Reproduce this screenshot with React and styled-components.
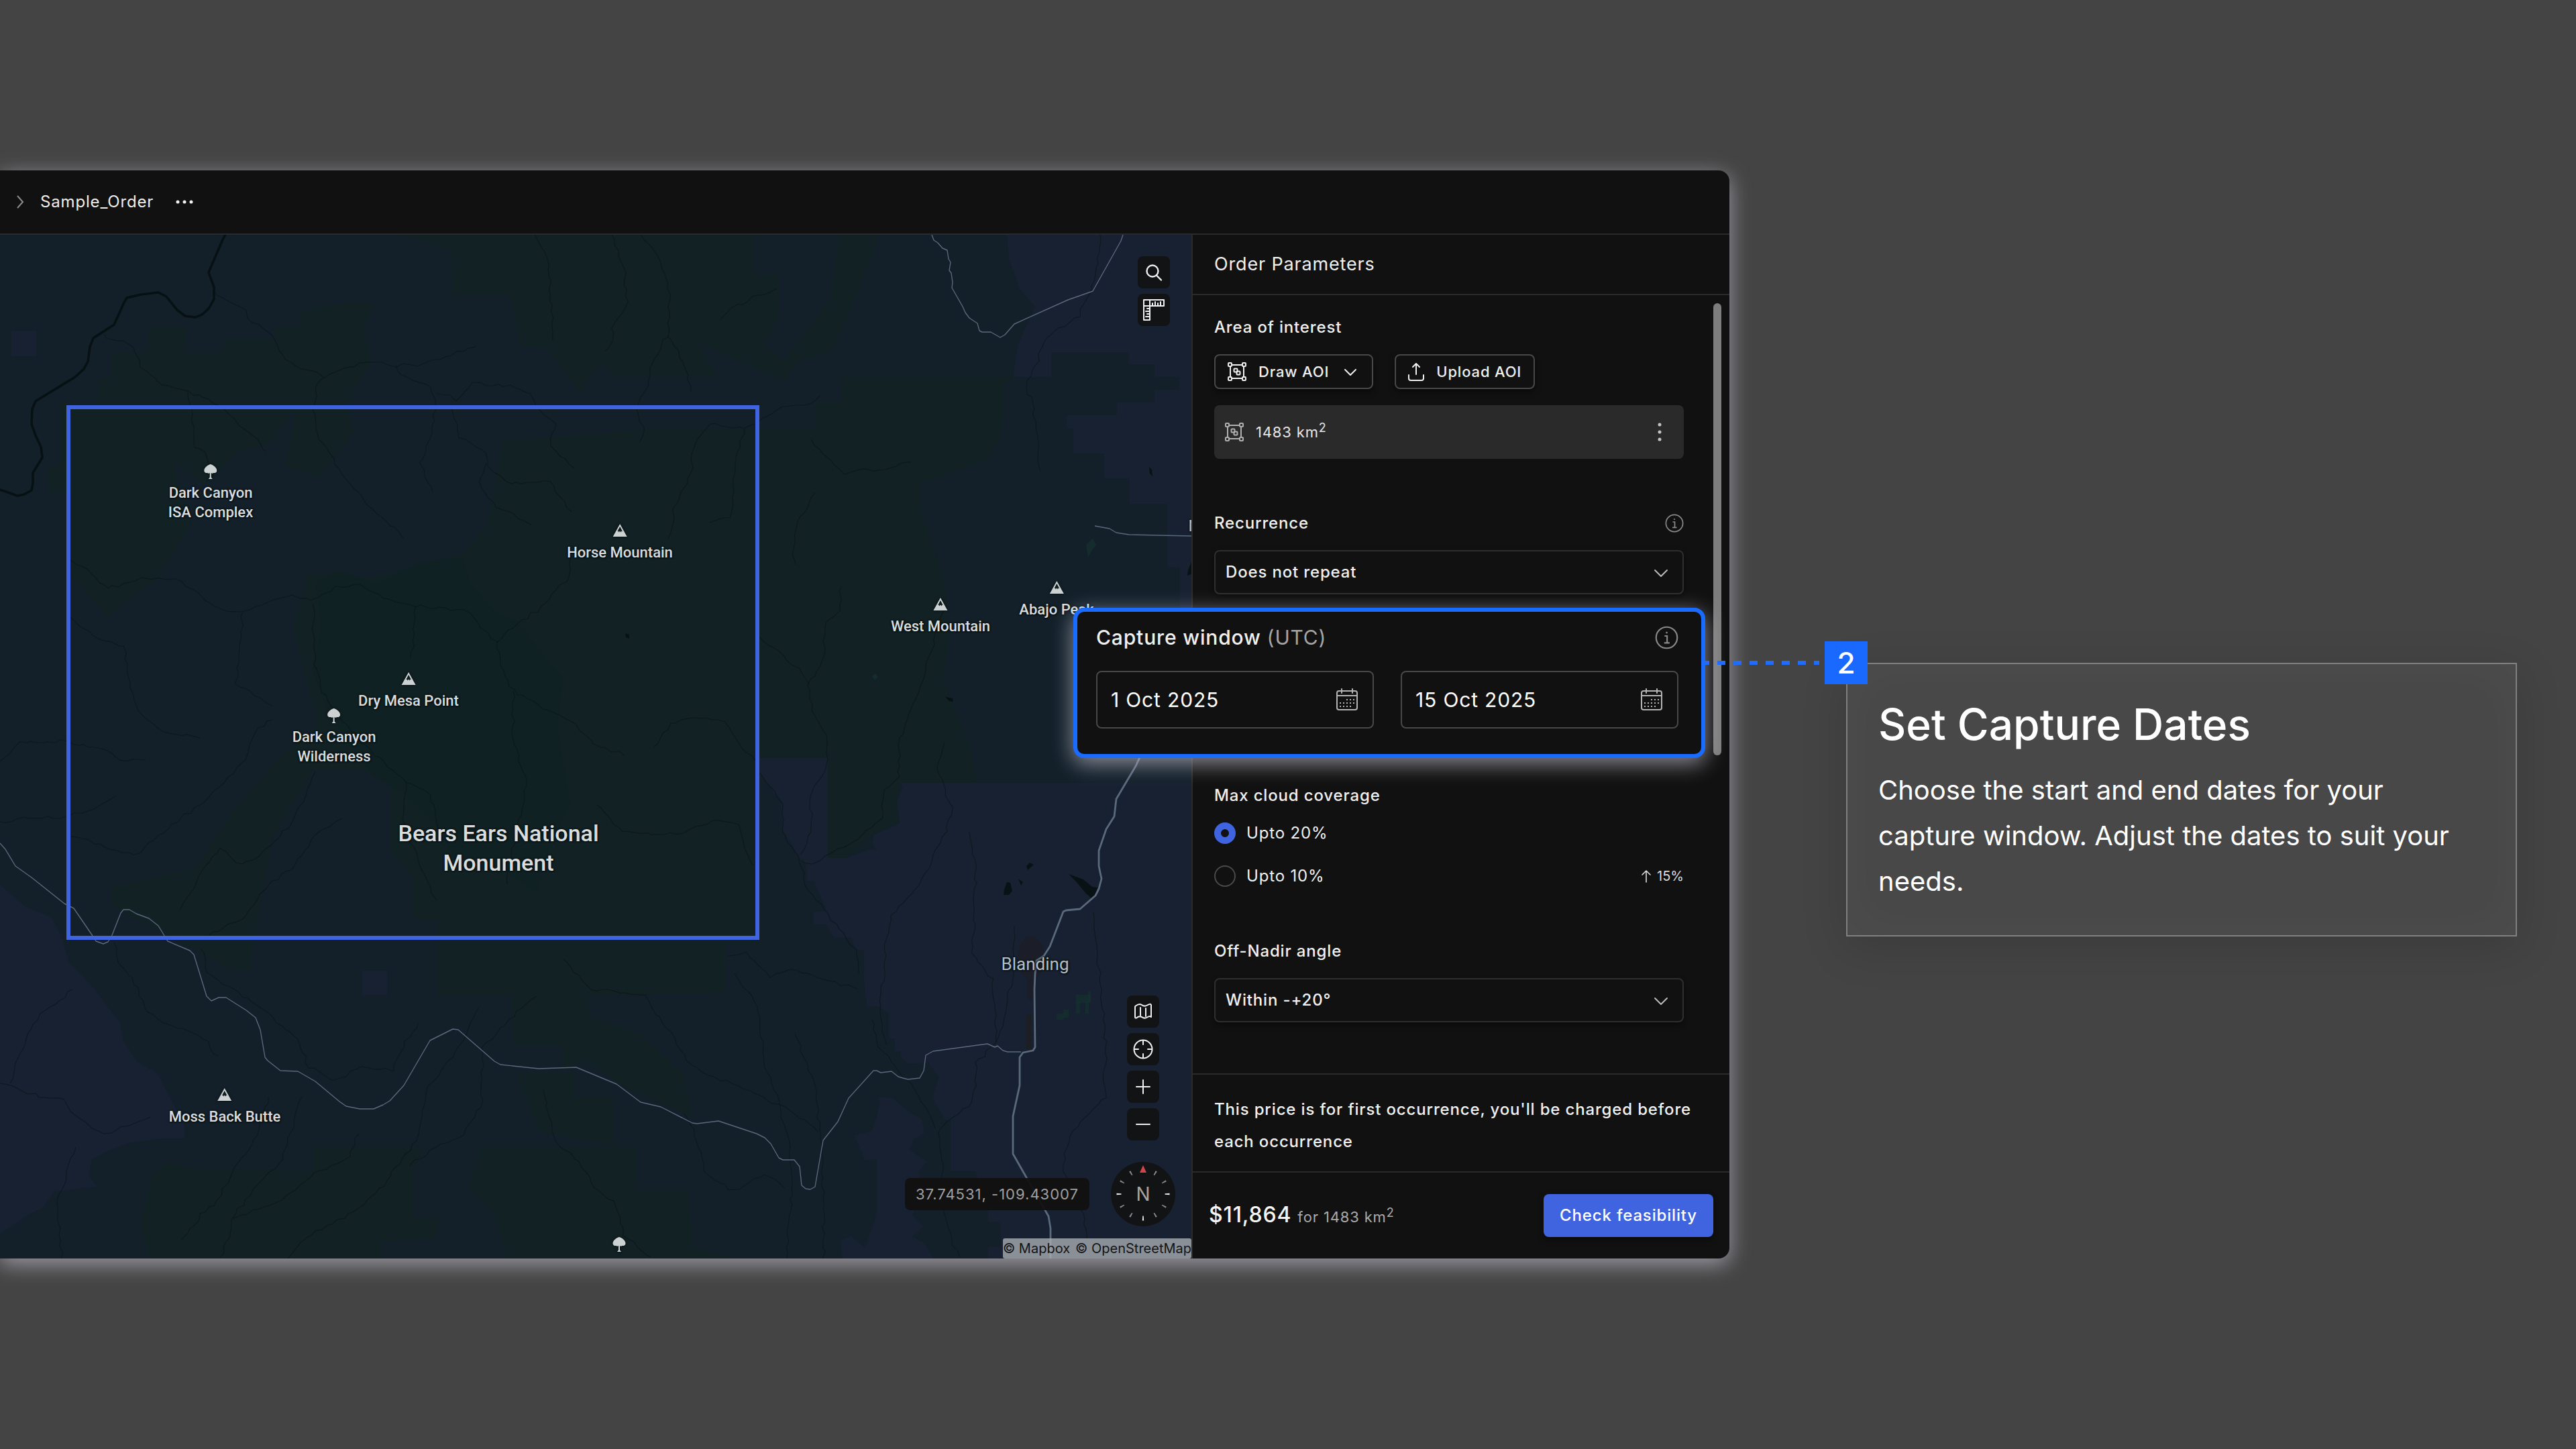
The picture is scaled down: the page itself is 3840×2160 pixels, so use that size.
import React from "react";
import styled, { createGlobalStyle, css } from "styled-components";

const GlobalStyle = createGlobalStyle`
  *, *::before, *::after { box-sizing: border-box; }
  body {
    margin: 0;
    background: #444444;
    color: #f0f0f0;
    font-family: Inter, "Liberation Sans", sans-serif;
    font-size: 24px;
    line-height: 32px;
  }
  button, input, select { font: inherit; color: inherit; letter-spacing: inherit; margin: 0; }
  h1, h2, p, fieldset { margin: 0; }
`;

/* ---------- page ---------- */

const Page = styled.div`
  display: grid;
  grid-template-columns: minmax(0, 1fr) 1000px;
  column-gap: 174px;
  align-items: start;
  min-height: 100vh;
  padding: 254px 88px 284px 0;
`;

const glow = css`
  box-shadow: 0 8px 32px rgba(200, 198, 212, 0.68);
`;

const AppWindow = styled.main`
  background: #111111;
  border-radius: 0 16px 16px 0;
  letter-spacing: 0.035em;
  ${glow}
`;

const TopBar = styled.header`
  display: flex;
  align-items: center;
  gap: 32px;
  height: 96px;
  padding: 0 24px;
  border-bottom: 2px solid #2a2a2a;
`;

const Crumb = styled.nav`
  display: flex;
  align-items: center;
  gap: 24px;
`;

const CrumbLink = styled.a`
  color: #eeeeee;
  text-decoration: none;
`;

const Workspace = styled.div`
  display: grid;
  grid-template-columns: minmax(0, 1fr) 802px;
`;

const PlainButton = styled.button`
  display: flex;
  align-items: center;
  justify-content: center;
  padding: 0;
  border: 0;
  background: none;
  cursor: pointer;
  svg { display: block; }
`;

/* ---------- map ---------- */

const MapArea = styled.section`
  position: relative;
  overflow: hidden;
  background: #13202a;
`;

const MapDrawing = styled.svg`
  position: absolute;
  inset: 0;
  width: 100%;
  height: 100%;
`;

const Place = styled.div`
  position: absolute;
  left: ${(p) => p.$x}px;
  top: ${(p) => p.$y}px;
  transform: translateX(-50%);
  display: flex;
  flex-direction: column;
  align-items: center;
  gap: 6px;
  color: ${(p) => (p.$dim ? "#b9bec4" : "#d9dddd")};
  font-family: Roboto, "Liberation Sans", sans-serif;
  font-size: ${(p) => p.$size || 22}px;
  font-weight: ${(p) => (p.$dim ? 400 : 500)};
  line-height: ${(p) => p.$line || 29}px;
  letter-spacing: 0;
  text-align: center;
  white-space: nowrap;
  text-shadow: 0 0 3px #0a1214, 0 0 3px #0a1214, 1px 1px 2px #0a1214;
  svg { display: block; filter: drop-shadow(0 0 2px #060c0e); }
`;

const ToolStack = styled.div`
  position: absolute;
  display: flex;
  flex-direction: column;
  gap: 8px;
  ${(p) => (p.$top ? "top: 32px; right: 32px;" : "bottom: 176px; right: 48px;")}
`;

const ToolButton = styled(PlainButton)`
  width: 48px;
  height: 48px;
  border-radius: 8px;
  background: #111315;
  color: #f0f0f0;
`;

const Compass = styled(PlainButton)`
  position: absolute;
  right: 24px;
  bottom: 48px;
  width: 96px;
  height: 96px;
  border-radius: 50%;
  background: #111315;
`;

const CompassLetter = styled.span`
  position: absolute;
  color: #a3a5a7;
  font-size: 28px;
  letter-spacing: 0;
`;

const Coordinates = styled.output`
  position: absolute;
  right: 152px;
  bottom: 72px;
  display: flex;
  align-items: center;
  height: 48px;
  padding: 0 16px;
  border-radius: 8px;
  background: rgba(17, 17, 17, 0.95);
  color: #a0a0a0;
  font-size: 22px;
  letter-spacing: 1px;
`;

const Attribution = styled.div`
  position: absolute;
  right: 0;
  bottom: 0;
  display: flex;
  gap: 8px;
  height: 30px;
  border-radius: 3px;
  background: rgba(168, 172, 178, 0.8);
  font-size: 20px;
  line-height: 30px;
  letter-spacing: 0;
  a { color: #141414; text-decoration: none; }
`;

/* ---------- side panel ---------- */

const Panel = styled.aside`
  border-left: 2px solid #2a2a2a;
`;

const PanelHeader = styled.div`
  display: flex;
  align-items: center;
  height: 90px;
  padding: 0 32px;
  border-bottom: 2px solid #2a2a2a;
  h1 { font-size: 27px; font-weight: 400; }
`;

const PanelBody = styled.form`
  position: relative;
  padding: 32px 68px 76px 32px;
`;

const ScrollThumb = styled.div`
  position: absolute;
  top: 12px;
  right: 12px;
  width: 12px;
  height: 674px;
  border-radius: 6px;
  background: #7d7d7d;
`;

const Section = styled.fieldset`
  display: flex;
  flex-direction: column;
  gap: 24px;
  min-width: 0;
  padding: 0;
  border: 0;
  margin-bottom: ${(p) => (p.$gap ?? 80)}px;
`;

const SectionHead = styled.div`
  display: flex;
  align-items: center;
  justify-content: space-between;
  height: 32px;
  font-weight: 500;
`;

const ButtonRow = styled.div`
  display: flex;
  gap: 32px;
`;

const OutlineButton = styled(PlainButton)`
  gap: 18px;
  height: 52px;
  padding: 0 18px;
  border: 2px solid #484848;
  border-radius: 8px;
  font-size: 22px;
  font-weight: 500;
  box-shadow: 0 4px 8px rgba(0, 0, 0, 0.5);
`;

const AreaItem = styled.div`
  display: flex;
  align-items: center;
  gap: 18px;
  height: 80px;
  padding: 0 16px;
  border-radius: 8px;
  background: #2a2a2a;
  color: #e6e6e6;
  font-size: 22px;
  > svg { color: #b0b0b0; }
  > button { margin-left: auto; width: 40px; height: 40px; color: #c4c4c4; }
`;

const Squared = styled.sup`
  font-size: 18px;
  line-height: 0;
`;

const SelectBox = styled.div`
  position: relative;
  height: 66px;
  border: 2px solid #2e2e2e;
  border-radius: 8px;
  box-shadow: 0 4px 8px rgba(0, 0, 0, 0.4);
  select {
    width: 100%;
    height: 100%;
    padding: 0 64px 0 15px;
    border: 0;
    background: transparent;
    appearance: none;
    font-weight: 500;
    outline: none;
  }
  svg {
    position: absolute;
    right: 20px;
    top: 20px;
    color: #bbbbbb;
    pointer-events: none;
  }
`;

const RadioRow = styled.div`
  display: flex;
  align-items: center;
  justify-content: space-between;
  height: 32px;
  & + & { margin-top: 8px; }
  label { display: flex; align-items: center; gap: 16px; }
`;

const Radio = styled.input`
  appearance: none;
  width: 32px;
  height: 32px;
  border: 2px solid #4a4a4a;
  border-radius: 50%;
  background: #111111;
  &:checked { border: 10px solid #4064e0; }
`;

const Surcharge = styled.span`
  display: flex;
  align-items: center;
  gap: 8px;
  color: #dddddd;
  font-size: 20px;
  letter-spacing: 0;
`;

/* the capture window section keeps its place in the form; its card is lifted above the page */
const CaptureSlot = styled.div`
  position: relative;
  height: 224px;
  margin: -60px 0 40px;
`;

const CaptureCard = styled.div`
  position: absolute;
  inset: 0 -32px 0 -210px;
  z-index: 2;
  padding: 18px 34px 38px 28px;
  border: 6px solid #1a6bff;
  border-radius: 16px;
  background: #111111;
  ${glow}
`;

const CaptureHead = styled.div`
  display: flex;
  align-items: center;
  justify-content: space-between;
  height: 40px;
  font-size: 30px;
  font-weight: 500;
  span { color: #a5a5a5; font-weight: 400; }
`;

const DateRow = styled.div`
  display: grid;
  grid-template-columns: repeat(2, minmax(0, 1fr));
  gap: 40px;
  margin-top: 30px;
`;

const DateField = styled.label`
  display: flex;
  align-items: center;
  height: 86px;
  padding: 0 22px 0 20px;
  border: 2px solid #484848;
  border-radius: 8px;
  font-size: 30px;
  input {
    flex: 1;
    min-width: 0;
    height: 100%;
    padding: 0;
    border: 0;
    background: transparent;
    outline: none;
    color: #ffffff;
  }
  svg { flex: none; color: #b4b4b4; }
`;

const Note = styled.p`
  padding: 28px 32px 20px;
  border-top: 2px solid #2a2a2a;
  border-bottom: 2px solid #2a2a2a;
  font-weight: 500;
  line-height: 48px;
`;

const PanelFooter = styled.div`
  display: flex;
  align-items: center;
  justify-content: space-between;
  padding: 32px 24px;
`;

const Price = styled.div`
  color: #aaaaaa;
  font-size: 22px;
  strong { color: #f4f4f4; font-size: 32px; font-weight: 500; margin-right: 2px; }
`;

const PrimaryButton = styled(PlainButton)`
  height: 64px;
  padding: 0 24px;
  border-radius: 8px;
  background: #4064e0;
  color: #ffffff;
  font-weight: 500;
  box-shadow: 0 4px 8px rgba(0, 0, 0, 0.5);
`;

/* ---------- callout ---------- */

const Callout = styled.aside`
  position: relative;
  margin-top: 734px;
  padding: 50px 46px 46px;
  border: 2px solid #808080;
  background: #484848;
  box-shadow: 0 16px 64px rgba(0, 0, 0, 0.14), inset 0 0 80px rgba(255, 255, 255, 0.03);
  color: #ffffff;
  h2 { margin-bottom: 24px; font-size: 64px; font-weight: 500; line-height: 80px; }
  p { font-size: 40px; line-height: 68px; }
`;

const StepBadge = styled.span`
  position: absolute;
  top: -34px;
  left: -34px;
  display: flex;
  align-items: center;
  justify-content: center;
  width: 64px;
  height: 64px;
  background: #1a69ff;
  font-size: 44px;
  font-weight: 500;
`;

const Connector = styled.span`
  position: absolute;
  top: -5px;
  left: -218px;
  z-index: 3;
  width: 176px;
  height: 6px;
  background: repeating-linear-gradient(90deg, #1f6dff 0 12px, transparent 12px 24px);
`;

/* ---------- icons ---------- */

const Svg = ({ w, h = w, vb, sw = 2, children }) => (
  <svg width={w} height={h} viewBox={vb || `0 0 ${w} ${h}`} fill="none" stroke="currentColor"
    strokeWidth={sw} strokeLinecap="round" strokeLinejoin="round" aria-hidden="true">
    {children}
  </svg>
);

const ChevronDown = () => <Svg w={24} h={24}><path d="M3 8l9 9 9-9" /></Svg>;
const SmallChevron = () => <Svg w={28}><path d="M6 11l8 8 8-8" /></Svg>;
const ShapeIcon = () => (
  <Svg w={28}>
    <path d="M7 4h14M7 24h14M4 7v14M24 7v14" />
    <rect x="1" y="1" width="5" height="5" rx="1" />
    <rect x="22" y="1" width="5" height="5" rx="1" />
    <rect x="1" y="22" width="5" height="5" rx="1" />
    <rect x="22" y="22" width="5" height="5" rx="1" />
    <rect x="9.5" y="9.5" width="5" height="5" rx="1" />
    <rect x="13.5" y="13.5" width="5" height="5" rx="1" />
  </Svg>
);
const UploadIcon = () => (
  <Svg w={24} h={28}><path d="M12 18V2M7 7l5-5 5 5M1 19v5q0 3 3 3h16q3 0 3-3v-5" /></Svg>
);
const InfoIcon = ({ size }) => (
  <svg width={size} height={size} viewBox="0 0 28 28" fill="none" stroke="#8a8a8a" strokeWidth="1.7" aria-hidden="true">
    <circle cx="14" cy="14" r="12.6" />
    <path d="M11.5 12h3v8M11 20.3h6.5" />
    <circle cx="14" cy="8" r="1.1" fill="#8a8a8a" stroke="none" />
  </svg>
);
const CalendarIcon = () => (
  <Svg w={32} h={34}>
    <rect x="1" y="4" width="30" height="28" rx="3" />
    <path d="M1 11h30M8 1v6M24 1v6" />
    {[[16, 17], [21, 17], [26, 17], [6, 22], [11, 22], [16, 22], [21, 22], [26, 22], [6, 27], [11, 27], [16, 27], [21, 27]].map(
      ([x, y]) => <path key={`${x}-${y}`} strokeLinecap="butt" d={`M${x} ${y - 1}v2`} />
    )}
  </Svg>
);
const ArrowUp = () => <Svg w={16} h={20} sw={1.6}><path d="M8 19V2M2 8l6-6 6 6" /></Svg>;
const SearchIcon = () => <Svg w={28} sw={2.4}><circle cx="12" cy="12" r="8.5" /><path d="M18 18.5l7 7" /></Svg>;
const RulerIcon = () => (
  <Svg w={34} sw={2}>
    <path d="M2 2h30v9H11v21H2zM2 11h9V2" />
    <path d="M15 11V7M19 11V5M23 11V7M27 11V5M11 15H7M11 19H5M11 23H7M11 27H5" />
  </Svg>
);
const MapIcon = () => (
  <Svg w={28}>
    <path d="M3 5.500q5-4 9-1.500 4 3 8 .5 5-3 6-.5v18q-2-2-6 .5-4 2.500-8-.5-4-2-8 1.500-2 .5-2-1.500V7q0-1 1-1.500z" />
    <path d="M10 8v12M18 9v12" />
  </Svg>
);
const TargetIcon = () => (
  <Svg w={30}><circle cx="15" cy="15" r="13.500" /><path d="M15 2v6M15 22v6M2 15h6M22 15h6" /></Svg>
);
const PlusIcon = () => <Svg w={24}><path d="M2 12h20M12 2v20" /></Svg>;
const MinusIcon = () => <Svg w={24}><path d="M2 12h20" /></Svg>;

const TreeIcon = () => (
  <svg width="20" height="22" viewBox="0 0 20 22" fill="#ccd2d2" aria-hidden="true">
    <path d="M10 0c-4 1-9.500 5-9.500 9.500 0 3 3 4 5 3.500 1 1 2.500 1 3.500 0v6.500L7 22h6l-2-2.500V13c1 1 2.500 1 3.500 0 2 .5 5-.5 5-3.500C19.500 5 14 1 10 0z" />
  </svg>
);
const PeakIcon = () => (
  <svg width="22" height="22" viewBox="0 0 22 22" aria-hidden="true">
    <path d="M11 0l10.500 19H.5z" fill="#ccd2d2" />
    <path d="M11 4l4 7.500-1.500-1-1 2-1.500-2-1.500 2-1-2-1.500 1z" fill="#0f1c1f" />
  </svg>
);

const CompassTicks = () => (
  <svg width="96" height="96" viewBox="0 0 96 96" aria-hidden="true">
    {Array.from({ length: 11 }, (_, i) => (i + 1) * 30).map((a) => (
      <path key={a} d="M46.800 8.500h2.400l-.5 7h-1.400z" fill={a % 90 ? "#8a8c8e" : "#e8e8e8"} transform={`rotate(${a} 48 48)`} />
    ))}
    <path d="M48 5l5 11H43z" fill="#d0454c" />
  </svg>
);

/* ---------- map drawing ---------- */

/* breaks a stream's segments into small irregular steps */
const meander = (points, seed) => {
  let s = seed * 7919 + 13;
  const rnd = () => {
    s = (s * 16807) % 2147483647;
    return s / 2147483647 - 0.5;
  };
  const out = [points[0]];
  for (let i = 1; i < points.length; i++) {
    const [x0, y0] = points[i - 1];
    const [x1, y1] = points[i];
    const n = Math.max(1, Math.round(Math.hypot(x1 - x0, y1 - y0) / 9));
    for (let k = 1; k <= n; k++) {
      const t = k / n;
      out.push([x0 + (x1 - x0) * t + rnd() * 5, y0 + (y1 - y0) * t + rnd() * 5]);
    }
  }
  return out.map(([x, y]) => `${x.toFixed(1)},${y.toFixed(1)}`).join(" ");
};

const navy = [
  "1501,350 1504,386 1520,431 1543,457 1517,515 1510,562 1567,562 1567,525 1683,525 1683,543 1721,543 1721,562 1758,562 1758,581 1721,581 1721,600 1665,600 1665,619 1590,619 1590,638 1600,638 1600,676 1646,676 1646,713 1684,713 1684,751 1740,751 1740,845 1759,845 1759,930 1776,930 1776,350",
  "1342,1167 1346,1173 1337,1193 1341,1227 1322,1236 1303,1244 1301,1257 1307,1267 1295,1267 1261,1279 1234,1279 1234,1130 1132,1130 1133,1153 1164,1196 1166,1236 1194,1282 1203,1289 1203,1313 1213,1313 1232,1357 1213,1360 1213,1378 1232,1378 1242,1397 1269,1397 1276,1416 1288,1416 1288,1460 1292,1500 1308,1500 1325,1510 1325,1548 1334,1548 1334,1567 1343,1567 1343,1576 1353,1585 1371,1585 1383,1583 1400,1606 1390,1635 1408,1669 1417,1670 1417,1745 1454,1746 1473,1804 1473,1821 1492,1821 1492,1859 1473,1859 1473,1876 1776,1876 1776,1167",
  "1300,1686 1312,1645 1308,1635 1330,1637 1360,1661 1374,1668 1378,1690 1363,1697 1355,1714 1382,1731 1370,1745 1375,1776 1360,1812 1377,1828 1360,1843 1380,1855 1391,1876 1256,1876 1252,1850 1268,1842 1290,1860 1300,1830 1307,1810 1307,1728 1290,1730 1273,1693",
  "0,1319 38,1351 77,1368 90,1392 103,1435 137,1470 179,1525 184,1552 205,1583 235,1600 256,1642 275,1676 275,1697 239,1697 192,1704 171,1711 137,1728 132,1752 145,1769 81,1776 64,1800 43,1810 17,1828 0,1838",
  "17,493 54,493 54,531 17,531",
  "540,1447 577,1447 577,1483 540,1483",
];

const green = [
  "166,525 221,525 221,487 278,487 278,525 333,525 333,505 409,505 409,487 447,487 447,466 488,453 560,451 542,487 554,537 534,573 517,604 528,644 476,712 425,694 442,605 408,658 356,673 304,723 258,687 285,780 240,858 160,920 105,858 105,733 72,733 72,694 89,694 89,601 145,601 145,563 166,563",
  "597,350 672,374 674,441 760,441 775,516 815,519 844,558 867,589 878,562 900,544 914,562 1069,562 1041,511 1107,542 1170,569 1187,542 1244,520 1290,408 1310,350 1250,350 1239,444 1167,538 1141,515 1161,471 1161,410 1124,410 1124,350",
  "748,657 960,640 1216,640 1216,600 1254,600 1254,562 1510,562 1497,573 1494,645 1474,685 1371,721 1374,765 1408,863 1415,954 1406,1014 1431,1075 1448,1114 1457,1167 1342,1167 1337,1193 1341,1227 1303,1244 1261,1279 1234,1279 1234,1130 1132,1130 1132,1408 1081,1408 1081,1482 876,1483 880,1514 957,1542 1017,1600 1034,1666 985,1645 932,1621 872,1580 842,1594 838,1557 765,1557 761,1483 651,1483 651,1372 616,1372 616,1310 582,1270 582,1168 536,1147 467,1147 406,1249 372,1445 345,1445 245,1392 165,1351 165,1323 291,1294 344,1212 413,1131 474,1082 459,1025 436,935 459,853 551,862 689,825 727,780",
  "209,1828 226,1748 256,1731 291,1742 466,1745 466,1709 632,1709 615,1745 615,1814 654,1814 650,1845 568,1852 568,1876 222,1876",
  "718,1709 949,1709 949,1774 1025,1774 1034,1859 1094,1876 756,1876 735,1807 697,1769",
  "769,1600 855,1600 855,1635 914,1635 914,1709 803,1686",
];

const deepGreen = "470,870 505,850 560,870 620,840 690,830 700,870 740,915 770,925 820,990 840,1010 830,1080 850,1200 820,1260 800,1330 740,1290 690,1300 650,1230 600,1180 560,1160 520,1110 490,1060 465,1000 480,930";

const water = [
  "1593,1303 1615,1311 1628,1322 1636,1323 1633,1334 1627,1339 1619,1332 1604,1314",
  "1501,1315 1506,1316 1509,1328 1504,1334 1496,1334 1497,1326",
  "1535,1286 1541,1289 1532,1297 1530,1291",
  "1518,1310 1525,1315 1522,1320",
  "1409,1039 1420,1041 1421,1046 1415,1045",
  "932,944 938,946 938,952 933,950",
  "1713,696 1717,700 1718,710 1714,706",
  "1776,838 1771,850 1770,858 1776,856",
];

const roads = [
  "1389,350 1392,358 1398,362 1405,370 1412,373 1414,386 1417,391 1415,403 1418,407 1420,421 1419,429 1435,457 1439,466 1445,474 1457,482 1460,493 1464,495 1477,495 1491,503 1498,499 1512,483 1592,447 1629,434 1671,359 1674,350",
  "1632,784 1654,788 1664,794 1683,797 1776,799",
  "0,1257 8,1266 23,1291 47,1308 96,1347 110,1354 138,1395 143,1403 154,1407 161,1404 167,1394 180,1361 184,1356 193,1356 203,1362 222,1369 236,1380 250,1403 283,1417 289,1423 308,1485 315,1492 326,1487 337,1487 367,1506 381,1517 388,1535 395,1576 399,1581 418,1596 444,1597 470,1612 506,1642 516,1649 536,1653 557,1653 571,1647 581,1641 602,1618 641,1551 675,1534 683,1535 737,1582 746,1587 803,1593 859,1591 919,1616 955,1643 985,1650 1032,1674 1039,1675 1071,1671 1128,1690 1140,1696 1149,1705 1161,1726 1167,1729 1184,1729 1192,1739 1195,1767 1201,1772 1208,1773 1215,1769 1227,1700 1249,1672 1265,1637 1302,1596 1307,1596 1313,1599 1329,1597 1339,1605 1353,1609 1371,1607 1377,1596 1380,1573 1391,1567 1472,1556 1483,1561 1487,1559 1495,1566 1502,1568 1522,1568",
];

const highway = "1699,1129 1693,1142 1664,1191 1661,1217 1649,1236 1638,1268 1638,1291 1642,1310 1638,1325 1633,1335 1610,1355 1589,1357 1585,1359 1565,1411 1556,1425 1545,1432 1543,1452 1542,1475 1543,1561 1540,1566 1525,1569 1520,1576 1520,1618 1510,1664 1510,1720 1563,1813 1566,1831 1566,1876";

const river = "336,350 332,357 311,406 319,428 319,446 311,460 301,469 291,473 276,471 264,462 248,442 236,436 210,439 189,444 185,451 170,484 139,504 134,517 131,539 125,550 112,562 53,598 48,610 47,632 53,649 61,666 63,682 49,705 49,721 47,731 36,737 26,739 0,730";

const streams = [
  [[319, 435], [333, 447], [360, 455], [370, 475], [402, 497], [425, 535], [440, 545], [475, 555], [482, 563], [510, 550], [555, 538], [590, 545], [630, 543], [680, 525], [708, 518]],
  [[482, 563], [472, 580], [466, 610], [475, 655], [497, 685], [520, 720], [560, 765], [600, 800]],
  [[155, 498], [165, 508], [185, 507], [204, 525], [210, 545], [235, 570], [280, 585], [310, 596], [335, 610], [360, 638], [385, 655], [397, 675]],
  [[280, 585], [288, 635], [292, 665], [310, 680], [318, 715]],
  [[590, 545], [600, 560], [640, 578], [650, 600], [642, 645], [628, 690], [645, 735]],
  [[650, 586], [670, 590], [678, 598], [705, 572], [760, 575], [790, 585], [800, 605], [828, 632], [820, 665], [855, 698]],
  [[672, 605], [685, 650], [720, 670], [730, 700], [760, 720], [820, 718], [850, 765]],
  [[725, 690], [712, 720], [740, 755], [790, 780]],
  [[797, 350], [815, 385], [820, 430], [825, 480], [822, 505]],
  [[912, 350], [930, 400], [935, 450], [914, 490], [910, 515], [900, 525]],
  [[955, 350], [985, 390], [998, 440], [995, 500], [975, 535], [965, 575], [950, 610], [960, 640], [952, 660]],
  [[995, 500], [1020, 540], [1031, 583]],
  [[1075, 475], [1090, 460], [1130, 440], [1158, 432]],
  [[1640, 350], [1635, 400], [1625, 435], [1608, 470], [1580, 490], [1555, 510], [1545, 545], [1530, 570], [1540, 610], [1545, 650], [1549, 700]],
  [[1222, 590], [1210, 600], [1175, 605], [1145, 620], [1110, 640], [1060, 632], [1035, 660], [1030, 705], [1005, 760], [998, 805]],
  [[1110, 640], [1098, 680], [1090, 770], [1060, 777]],
  [[1210, 655], [1230, 680], [1257, 706], [1285, 700], [1310, 703], [1360, 688]],
  [[1215, 735], [1190, 780], [1180, 825], [1187, 842]],
  [[1254, 875], [1250, 910], [1230, 930], [1228, 985], [1205, 1020], [1210, 1060], [1235, 1105], [1232, 1140], [1210, 1180], [1208, 1240], [1195, 1275]],
  [[1132, 950], [1160, 970], [1190, 995], [1205, 1018]],
  [[1407, 910], [1385, 980], [1365, 1040], [1340, 1110], [1340, 1160], [1318, 1180], [1315, 1220], [1270, 1255], [1240, 1270], [1210, 1290], [1193, 1285]],
  [[1408, 1107], [1396, 1145], [1418, 1205], [1410, 1240], [1387, 1285], [1370, 1320], [1330, 1365], [1320, 1400], [1318, 1460], [1310, 1490], [1320, 1555]],
  [[1445, 1240], [1455, 1300], [1452, 1370], [1450, 1420], [1480, 1460], [1484, 1520], [1485, 1553]],
  [[1132, 1152], [1165, 1196], [1168, 1240], [1193, 1285], [1200, 1320], [1240, 1370], [1275, 1415], [1280, 1450]],
  [[1512, 1380], [1510, 1460], [1500, 1490], [1495, 1530], [1483, 1555], [1455, 1585], [1455, 1620], [1445, 1650], [1410, 1670], [1398, 1690], [1405, 1740], [1400, 1780], [1412, 1830], [1428, 1876]],
  [[1630, 1360], [1632, 1400], [1640, 1460], [1645, 1520], [1650, 1570], [1645, 1600], [1650, 1635], [1600, 1685], [1588, 1720], [1585, 1745], [1610, 1790], [1625, 1876]],
  [[1300, 1520], [1310, 1560], [1335, 1590], [1365, 1625], [1395, 1680]],
  [[105, 835], [130, 850], [160, 878], [210, 862], [270, 866], [295, 885], [320, 905], [350, 912], [380, 905], [425, 888], [465, 895], [500, 875], [535, 872], [580, 895], [620, 903], [700, 912], [715, 935], [740, 958], [750, 1000], [765, 1030], [810, 1055], [860, 1080], [885, 1110], [930, 1125]],
  [[740, 958], [770, 930], [800, 910], [830, 880], [850, 860], [850, 830]],
  [[466, 900], [470, 990], [480, 1030], [510, 1075], [560, 1125], [605, 1165], [640, 1185], [660, 1250]],
  [[605, 1165], [600, 1220], [625, 1290], [650, 1342]],
  [[765, 1030], [765, 1100], [785, 1170], [770, 1240], [755, 1320]],
  [[362, 912], [358, 960], [352, 1020], [380, 1035], [405, 1053]],
  [[620, 903], [614, 980]],
  [[105, 920], [140, 948], [185, 965], [190, 1010], [205, 1060], [250, 1095], [297, 1098]],
  [[407, 1073], [385, 1085], [365, 1130], [320, 1180], [290, 1205], [250, 1235], [200, 1275], [150, 1260], [105, 1245]],
  [[470, 1150], [440, 1220], [400, 1265], [360, 1290], [330, 1265], [300, 1300], [270, 1355]],
  [[510, 1220], [470, 1245], [440, 1290], [400, 1320], [360, 1370], [310, 1395]],
  [[0, 1225], [50, 1218], [90, 1220], [130, 1210], [170, 1188]],
  [[0, 1135], [30, 1108], [90, 1105], [150, 1115], [180, 1132], [215, 1133]],
  [[890, 1200], [930, 1240], [980, 1245], [1020, 1240], [1070, 1222], [1100, 1230], [1120, 1290]],
  [[975, 1113], [1000, 1080], [1035, 1070], [1080, 1075], [1100, 1110], [1125, 1135]],
  [[113, 1710], [85, 1790], [92, 1876]],
  [[0, 1615], [60, 1635], [95, 1640], [120, 1670], [155, 1690], [225, 1668]],
  [[15, 1615], [30, 1570], [60, 1510], [110, 1475]],
  [[170, 1405], [180, 1440], [200, 1465], [220, 1510], [260, 1530], [290, 1540], [310, 1555], [325, 1575]],
  [[300, 1415], [310, 1450], [340, 1470], [375, 1495], [400, 1510], [420, 1530], [445, 1550], [460, 1590], [500, 1612], [540, 1590], [585, 1595], [600, 1560], [625, 1525]],
  [[400, 1635], [380, 1700], [350, 1740], [325, 1790], [300, 1810], [270, 1850]],
  [[450, 1635], [420, 1730], [390, 1760], [350, 1810], [330, 1876]],
  [[535, 1690], [520, 1725], [460, 1755], [420, 1790], [350, 1815]],
  [[715, 1500], [680, 1570], [640, 1620], [620, 1700], [590, 1740], [560, 1780], [520, 1810], [450, 1850], [430, 1876]],
  [[800, 1485], [765, 1515], [720, 1560], [718, 1650], [690, 1690], [610, 1735]],
  [[840, 1430], [880, 1475], [960, 1482], [1000, 1540], [1030, 1590], [1100, 1620], [1170, 1650], [1220, 1685]],
  [[1095, 1450], [1130, 1500], [1138, 1580], [1160, 1640], [1175, 1700], [1180, 1780], [1172, 1876]],
  [[1185, 1540], [1215, 1620], [1226, 1720], [1228, 1876]],
  [[810, 1625], [830, 1700], [870, 1740], [885, 1770], [915, 1790], [930, 1840], [970, 1876]],
  [[1085, 1425], [1110, 1420], [1150, 1455], [1180, 1445], [1230, 1460], [1280, 1475]],
  [[1020, 1660], [1040, 1700], [1050, 1750], [1095, 1775], [1140, 1750], [1170, 1770]],
];

const Terrain = () => (
  <MapDrawing viewBox="0 350 1776 1526" preserveAspectRatio="xMinYMin slice" aria-hidden="true">
    <g fill="#112124">{green.map((p) => <polygon key={p} points={p} />)}</g>
    <polygon points={deepGreen} fill="#102123" />
    <g fill="#172131">{navy.map((p) => <polygon key={p} points={p} />)}</g>
    <g fill="#1b1e29">
      <ellipse cx="1537" cy="1428" rx="20" ry="32" />
      <rect x="1531" y="1440" width="10" height="50" />
    </g>
    <rect x="1530" y="1512" width="7" height="54" fill="#1d1d24" />
    <g fill="#15302f" fillOpacity="0.8">
      <rect x="1604" y="1483" width="22" height="12" />
      <rect x="1622" y="1478" width="4" height="14" />
      <rect x="1604" y="1493" width="6" height="18" />
      <rect x="1618" y="1493" width="5" height="18" />
      <rect x="1575" y="1511" width="10" height="9" />
      <rect x="1585" y="1505" width="8" height="12" />
      <path d="M1619 812l10-9 5 9-6 8-6 11z" />
      <path d="M1300 1008l5-4 4 5-5 5z" />
    </g>
    <g fill="none" stroke="#0b161a" strokeWidth="1.2" strokeOpacity="0.7">
      {streams.map((s, i) => <polyline key={i} points={meander(s, i + 1)} />)}
    </g>
    <g fill="#081215">{water.map((p) => <polygon key={p} points={p} />)}</g>
    <polyline points={river} fill="none" stroke="#071013" strokeWidth="3.500" strokeLinejoin="round" />
    <g fill="none" stroke="#5a697c" strokeLinejoin="round">
      {roads.map((p) => <polyline key={p} points={p} strokeWidth="1.400" />)}
      <polyline points={highway} strokeWidth="2.800" />
    </g>
    <rect x="102" y="607" width="1027" height="791" fill="none" stroke="#4064e0" strokeWidth="6" />
  </MapDrawing>
);

const places = [
  { x: 314, y: 342, icon: "tree", lines: ["Dark Canyon", "ISA Complex"] },
  { x: 924, y: 431, icon: "peak", lines: ["Horse Mountain"] },
  { x: 1402, y: 541, icon: "peak", lines: ["West Mountain"] },
  { x: 1575, y: 516, icon: "peak", lines: ["Abajo Peak"] },
  { x: 609, y: 652, icon: "peak", lines: ["Dry Mesa Point"] },
  { x: 498, y: 706, icon: "tree", lines: ["Dark Canyon", "Wilderness"] },
  { x: 335, y: 1272, icon: "peak", lines: ["Moss Back Butte"] },
  { x: 923, y: 1494, icon: "tree", lines: [] },
  { x: 743, y: 870, size: 34, line: 44, lines: ["Bears Ears National", "Monument"] },
  { x: 1543, y: 1073, size: 26, dim: true, lines: ["Blanding"] },
  { x: 1780, y: 420, size: 24, dim: true, lines: ["N"] },
];

const MapPanel = () => (
  <MapArea aria-label="Map">
    <Terrain />
    {places.map((p) => (
      <Place key={`${p.x}-${p.y}`} $x={p.x} $y={p.y} $size={p.size} $line={p.line} $dim={p.dim}>
        {p.icon === "tree" && <TreeIcon />}
        {p.icon === "peak" && <PeakIcon />}
        {p.lines.length > 0 && (
          <div>{p.lines.map((l) => <div key={l}>{l}</div>)}</div>
        )}
      </Place>
    ))}
    <ToolStack $top>
      <ToolButton type="button" aria-label="Search"><SearchIcon /></ToolButton>
      <ToolButton type="button" aria-label="Measure"><RulerIcon /></ToolButton>
    </ToolStack>
    <ToolStack>
      <ToolButton type="button" aria-label="Map style"><MapIcon /></ToolButton>
      <ToolButton type="button" aria-label="Center map"><TargetIcon /></ToolButton>
      <ToolButton type="button" aria-label="Zoom in"><PlusIcon /></ToolButton>
      <ToolButton type="button" aria-label="Zoom out"><MinusIcon /></ToolButton>
    </ToolStack>
    <Coordinates>37.74531, -109.43007</Coordinates>
    <Compass type="button" aria-label="Face north">
      <CompassTicks />
      <CompassLetter>N</CompassLetter>
    </Compass>
    <Attribution>
      <a href="#mapbox">© Mapbox</a>
      <a href="#osm">© OpenStreetMap</a>
    </Attribution>
  </MapArea>
);

/* ---------- form ---------- */

const SelectField = ({ id, options }) => (
  <SelectBox>
    <select id={id} defaultValue={options[0]}>
      {options.map((o) => <option key={o}>{o}</option>)}
    </select>
    <ChevronDown />
  </SelectBox>
);

const DateInput = ({ label, value }) => (
  <DateField>
    <input type="text" aria-label={label} defaultValue={value} />
    <CalendarIcon />
  </DateField>
);

const OrderPanel = () => (
  <Panel>
    <PanelHeader><h1>Order Parameters</h1></PanelHeader>
    <PanelBody>
      <ScrollThumb />
      <Section>
        <SectionHead>Area of interest</SectionHead>
        <ButtonRow>
          <OutlineButton type="button"><ShapeIcon />Draw AOI<SmallChevron /></OutlineButton>
          <OutlineButton type="button"><UploadIcon />Upload AOI</OutlineButton>
        </ButtonRow>
        <AreaItem>
          <ShapeIcon />
          <span>1483 km<Squared>2</Squared></span>
          <PlainButton type="button" aria-label="Area options">
            <svg width="8" height="28" viewBox="0 0 8 28" fill="currentColor" aria-hidden="true">
              <circle cx="4" cy="3" r="2.500" /><circle cx="4" cy="14" r="2.500" /><circle cx="4" cy="25" r="2.500" />
            </svg>
          </PlainButton>
        </AreaItem>
      </Section>

      <Section>
        <SectionHead>
          <label htmlFor="recurrence">Recurrence</label>
          <InfoIcon size={28} />
        </SectionHead>
        <SelectField id="recurrence" options={["Does not repeat"]} />
      </Section>

      <CaptureSlot>
        <CaptureCard role="group" aria-labelledby="capture-title">
          <CaptureHead>
            <div id="capture-title">Capture window <span>(UTC)</span></div>
            <InfoIcon size={35} />
          </CaptureHead>
          <DateRow>
            <DateInput label="Start date" value="1 Oct 2025" />
            <DateInput label="End date" value="15 Oct 2025" />
          </DateRow>
        </CaptureCard>
      </CaptureSlot>

      <Section>
        <SectionHead>Max cloud coverage</SectionHead>
        <RadioRow>
          <label><Radio type="radio" name="cloud" defaultChecked />Upto 20%</label>
        </RadioRow>
        <RadioRow>
          <label><Radio type="radio" name="cloud" />Upto 10%</label>
          <Surcharge><ArrowUp />15%</Surcharge>
        </RadioRow>
      </Section>

      <Section $gap={0}>
        <SectionHead><label htmlFor="nadir">Off-Nadir angle</label></SectionHead>
        <SelectField id="nadir" options={["Within -+20°"]} />
      </Section>
    </PanelBody>
    <Note>This price is for first occurrence, you'll be charged before each occurrence</Note>
    <PanelFooter>
      <Price><strong>$11,864</strong> for 1483 km<Squared>2</Squared></Price>
      <PrimaryButton type="button">Check feasibility</PrimaryButton>
    </PanelFooter>
  </Panel>
);

export default function App() {
  return (
    <>
      <GlobalStyle />
      <Page>
        <AppWindow>
          <TopBar>
            <Crumb aria-label="Breadcrumb">
              <svg width="12" height="20" viewBox="0 0 12 20" fill="none" stroke="#8c8c8c" strokeWidth="2" aria-hidden="true">
                <path d="M2 1l8 9-8 9" />
              </svg>
              <CrumbLink href="#order">Sample_Order</CrumbLink>
            </Crumb>
            <PlainButton type="button" aria-label="Order options">
              <svg width="28" height="8" viewBox="0 0 28 8" fill="#f0f0f0" aria-hidden="true">
                <circle cx="4" cy="4" r="2.500" /><circle cx="14" cy="4" r="2.500" /><circle cx="24" cy="4" r="2.500" />
              </svg>
            </PlainButton>
          </TopBar>
          <Workspace>
            <MapPanel />
            <OrderPanel />
          </Workspace>
        </AppWindow>
        <Callout>
          <Connector />
          <StepBadge>2</StepBadge>
          <h2>Set Capture Dates</h2>
          <p>Choose the start and end dates for your capture window. Adjust the dates to suit your needs.</p>
        </Callout>
      </Page>
    </>
  );
}
